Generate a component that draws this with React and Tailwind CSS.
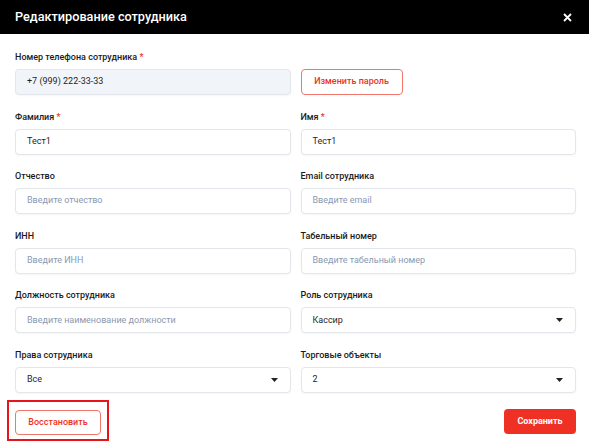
import React from 'react';

const font = { fontFamily: 'Roboto, "Noto Sans", sans-serif' };

const Label = ({ children, required }) => (
    <div className="text-[9px] leading-[14px] font-medium text-[#1a1a1a] mb-[5px]">
        {children}
        {required && <span className="text-[#ee3124]"> *</span>}
    </div>
);

const Input = ({ value, placeholder, disabled }) => (
    <div
        className={`h-[26px] flex items-center px-[11px] rounded-[4px] border border-[#e3e6ea] shadow-[0_1px_2px_rgba(0,0,0,0.04)] text-[9px] ${
            disabled ? 'bg-[#f1f4f8]' : 'bg-white'
        }`}
    >
        {value ? (
            <span className="text-[#1f1f1f]">{value}</span>
        ) : (
            <span className="text-[#8a99b1]">{placeholder}</span>
        )}
    </div>
);

const Select = ({ value }) => (
    <div className="h-[26px] flex items-center justify-between pl-[11px] pr-[12px] rounded-[4px] border border-[#e3e6ea] shadow-[0_1px_2px_rgba(0,0,0,0.04)] bg-white text-[9px] text-[#1f1f1f]">
        <span>{value}</span>
        <svg width="7" height="4" viewBox="0 0 7 4">
            <path d="M0 0 H7 L3.5 4 Z" fill="#222" />
        </svg>
    </div>
);

const Field = ({ label, required, children }) => (
    <div>
        <Label required={required}>{label}</Label>
        {children}
    </div>
);

export default function App() {
    return (
        <div className="w-[589px] h-[448px] bg-white overflow-hidden" style={font}>
            {/* Header */}
            <div className="h-[34px] bg-black flex items-center justify-between pl-[15px] pr-[17px]">
                <h1 className="text-white text-[12.7px] font-medium">Редактирование сотрудника</h1>
                <svg width="9" height="9" viewBox="0 0 9 9">
                    <path d="M1 1 L8 8 M8 1 L1 8" stroke="#fff" strokeWidth="1.8" />
                </svg>
            </div>

            {/* Form */}
            <div className="pt-[16px] pl-[15px] pr-[13px]">
                <div className="grid grid-cols-2 gap-x-[10px] gap-y-[14.6px]">
                    <Field label="Номер телефона сотрудника" required>
                        <Input value="+7 (999) 222-33-33" disabled />
                    </Field>
                    <div className="flex items-end">
                        <button className="h-[26px] w-[102px] rounded-[4px] border border-[#f0766c] text-[#ee3124] text-[9px] font-medium bg-white">
                            Изменить пароль
                        </button>
                    </div>

                    <Field label="Фамилия" required>
                        <Input value="Тест1" />
                    </Field>
                    <Field label="Имя" required>
                        <Input value="Тест1" />
                    </Field>

                    <Field label="Отчество">
                        <Input placeholder="Введите отчество" />
                    </Field>
                    <Field label="Email сотрудника">
                        <Input placeholder="Введите email" />
                    </Field>

                    <Field label="ИНН">
                        <Input placeholder="Введите ИНН" />
                    </Field>
                    <Field label="Табельный номер">
                        <Input placeholder="Введите табельный номер" />
                    </Field>

                    <Field label="Должность сотрудника">
                        <Input placeholder="Введите наименование должности" />
                    </Field>
                    <Field label="Роль сотрудника">
                        <Select value="Кассир" />
                    </Field>

                    <Field label="Права сотрудника">
                        <Select value="Все" />
                    </Field>
                    <Field label="Торговые объекты">
                        <Select value="2" />
                    </Field>
                </div>

                {/* Footer buttons */}
                <div className="flex items-center justify-between mt-[15px]">
                    <div className="relative">
                        <button className="h-[25px] w-[86px] rounded-[4px] border border-[#f0766c] text-[#ee3124] text-[9px] font-medium bg-white">
                            Восстановить
                        </button>
                        <div className="absolute -left-[8px] -top-[8px] w-[102px] h-[41px] border-2 border-[#e8141a] pointer-events-none" />
                    </div>
                    <button className="h-[25px] w-[72px] rounded-[4px] bg-[#ee3124] text-white text-[9px] font-bold">
                        Сохранить
                    </button>
                </div>
            </div>
        </div>
    );
}
